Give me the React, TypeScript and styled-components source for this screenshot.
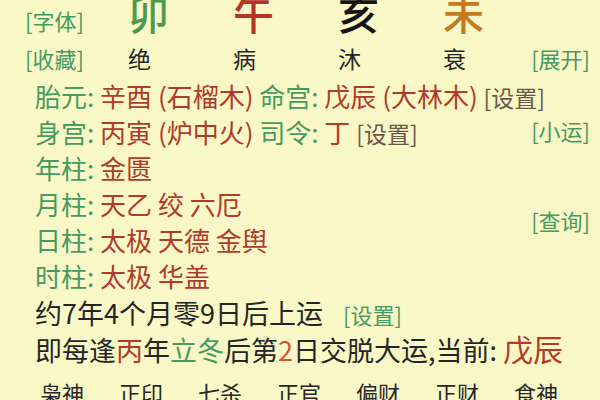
import React from "react";
import styled, { createGlobalStyle } from "styled-components";

const Global = createGlobalStyle`
  html, body { margin: 0; padding: 0; }
  body {
    width: 600px;
    height: 400px;
    overflow: hidden;
    background: #faf8c6;
    font-family: "Noto Sans CJK SC", "Noto Sans", sans-serif;
  }
`;

const C = {
  green: "#459b62",
  red: "#b03a2c",
  brown: "#6b5848",
  dark: "#262626",
  orange: "#c47a22",
};

const Page = styled.div`
  width: 600px;
  height: 400px;
  overflow: hidden;
  display: flex;
  flex-direction: column;
`;

const Header = styled.div`
  display: grid;
  grid-template-columns: 103px 105px 105px 105px 1fr auto;
  grid-template-rows: 40px 36px;
  padding: 0 10px 0 25px;
  align-items: center;
`;

const Link = styled.span<{ $tone?: "green" | "brown"; $size?: number; $gap?: number }>`
  color: ${(p) => (p.$tone === "brown" ? C.brown : C.green)};
  font-size: ${(p) => p.$size ?? 22}px;
  margin-left: ${(p) => p.$gap ?? 0}px;
  line-height: 1;
  white-space: nowrap;
`;

const Pillar = styled.span<{ $color: string }>`
  color: ${(p) => p.$color};
  font-size: 41px;
  line-height: 24px;
  align-self: start;
  font-weight: 500;
`;

const Stage = styled.span`
  color: ${C.dark};
  font-size: 23px;
  line-height: 1;
`;

const Rows = styled.div`
  display: grid;
  grid-template-columns: 1fr auto;
  grid-auto-rows: 36px;
  align-items: center;
  padding: 2px 10px 0 35px;
`;

const Line = styled.div<{ $full?: boolean }>`
  grid-column: ${(p) => (p.$full ? "1 / -1" : "1")};
  font-size: 26px;
  line-height: 1;
  white-space: nowrap;
  color: ${C.red};
`;

const Side = styled.div<{ $rows?: string }>`
  grid-column: 2;
  grid-row: ${(p) => p.$rows ?? "auto"};
  align-self: center;
`;

const Label = styled.span`
  color: ${C.green};
`;

const Val = styled.span<{ $c?: string; $size?: number }>`
  color: ${(p) => p.$c ?? C.red};
  font-size: ${(p) => (p.$size ? `${p.$size}px` : "inherit")};
`;

const Text = styled.div`
  grid-column: 1 / -1;
  color: ${C.dark};
  font-size: 27px;
  line-height: 1;
  white-space: nowrap;
`;

const Gods = styled.div`
  grid-column: 1 / -1;
  display: grid;
  grid-template-columns: repeat(7, 79px);
  margin-left: 5px;
  align-self: start;
  padding-top: 15px;
`;

const God = styled.span`
  color: ${C.dark};
  font-size: 22px;
  line-height: 1;
  white-space: nowrap;
`;

const pillars = [
  { ch: "卯", color: "#4b9b4e" },
  { ch: "午", color: "#b8322a" },
  { ch: "亥", color: "#141414" },
  { ch: "未", color: C.orange },
];
const stages = ["绝", "病", "沐", "衰"];
const gods = ["枭神", "正印", "七杀", "正官", "偏财", "正财", "食神"];

export default function App() {
  return (
    <Page>
      <Global />
      <Header>
        <Link>[字体]</Link>
        {pillars.map((p) => (
          <Pillar key={p.ch} $color={p.color}>
            {p.ch}
          </Pillar>
        ))}
        <span />
        <Link>[收藏]</Link>
        {stages.map((s) => (
          <Stage key={s}>{s}</Stage>
        ))}
        <Link>[展开]</Link>
      </Header>
      <Rows>
        <Line $full>
          <Label>胎元: </Label>辛酉 (石榴木) <Label>命宫: </Label>戊辰 (大林木){" "}
          <Link $tone="brown" $size={23}>[设置]</Link>
        </Line>
        <Line>
          <Label>身宫: </Label>丙寅 (炉中火) <Label>司令: </Label>丁{" "}
          <Link $tone="brown" $size={23}>[设置]</Link>
        </Line>
        <Side>
          <Link>[小运]</Link>
        </Side>
        <Line>
          <Label>年柱: </Label>金匮
        </Line>
        <Line>
          <Label>月柱: </Label>天乙 绞 六厄
        </Line>
        <Side $rows="4 / span 2">
          <Link>[查询]</Link>
        </Side>
        <Line>
          <Label>日柱: </Label>太极 天德 金舆
        </Line>
        <Line>
          <Label>时柱: </Label>太极 华盖
        </Line>
        <Text>
          约7年4个月零9日后上运<Link $gap={20}>[设置]</Link>
        </Text>
        <Text>
          即每逢<Val>丙</Val>年<Val $c={C.green}>立冬</Val>后第<Val $c="#d0562a">2</Val>
          日交脱大运,当前: <Val $size={30}>戊辰</Val>
        </Text>
        <Gods>
          {gods.map((g) => (
            <God key={g}>{g}</God>
          ))}
        </Gods>
      </Rows>
    </Page>
  );
}
